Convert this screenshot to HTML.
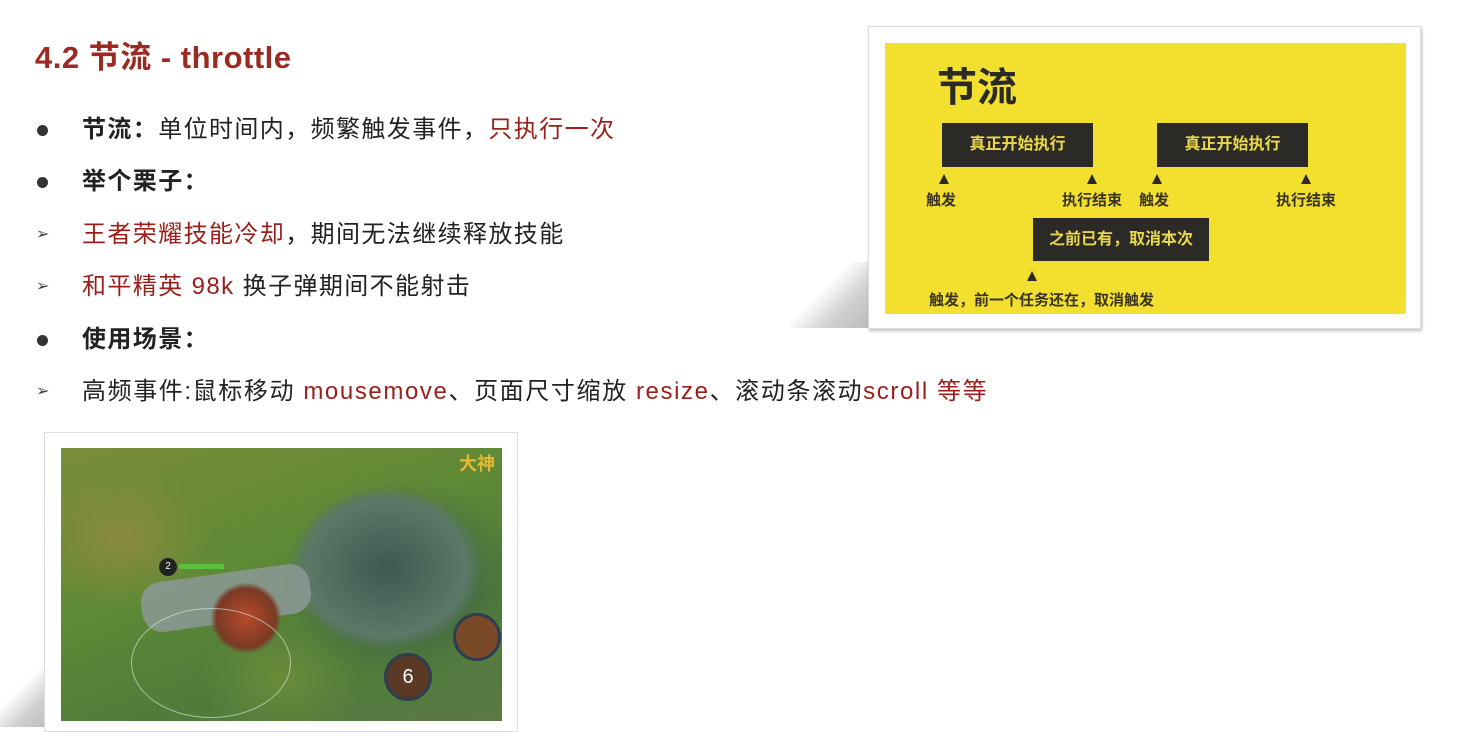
<!DOCTYPE html>
<html><head><meta charset="utf-8"><style>
*{margin:0;padding:0;box-sizing:border-box}
body{width:1480px;height:727px;background:#fff;position:relative;overflow:hidden;font-family:"Liberation Sans","Noto Sans CJK SC",sans-serif;color:#222}
.t{position:absolute;left:35px;top:32px;font-size:31px;font-weight:bold;color:#9a2a22;white-space:nowrap;letter-spacing:0.5px}
.l{position:absolute;left:82px;font-size:24px;letter-spacing:1.4px;white-space:nowrap;line-height:30px}
.r{color:#9a1f1a}
.b{font-weight:bold}
.dot{position:absolute;left:37px;width:11px;height:11px;border-radius:50%;background:#333}
.ar{position:absolute;left:36px;font-size:16px;color:#444}
.card{position:absolute;left:868px;top:26px;width:553px;height:303px;background:#fff;border:1px solid #ddd;box-shadow:1px 2px 3px rgba(0,0,0,.25)}
.y{position:absolute;left:16px;top:16px;width:521px;height:271px;background:#f2df2e}
.bx{position:absolute;background:#2c2a26;color:#e8d84a;font-weight:bold;font-size:16px;text-align:center;line-height:44px}
.s{position:absolute;font-size:15px;font-weight:bold;color:#3a3320;white-space:nowrap}
.tri{position:absolute;width:0;height:0;border-left:5px solid transparent;border-right:5px solid transparent;border-bottom:10px solid #2c2a26}
.shadow{position:absolute;left:790px;top:262px;width:80px;height:66px;background:linear-gradient(135deg,transparent 40%,#cfcfcf 70%,#bbb)}
.shadow2{position:absolute;left:0;top:660px;width:50px;height:67px;background:linear-gradient(135deg,transparent 40%,#d0d0d0 70%,#bbb)}
.gf{position:absolute;left:44px;top:432px;width:474px;height:300px;background:#fff;border:1px solid #ddd}
.g{position:absolute;left:16px;top:15px;width:441px;height:273px;overflow:hidden;
background:radial-gradient(ellipse 90px 70px at 60px 90px,#8a8a3e,transparent),radial-gradient(ellipse 120px 100px at 340px 130px,#3f5a4c,transparent),radial-gradient(ellipse 80px 60px at 220px 230px,#6a8c3a,transparent),linear-gradient(160deg,#7b8d3a,#5f8a36 40%,#4f7c3a 70%,#5a7a44)}
</style></head><body>
<div class="t">4.2 节流 - throttle</div>
<div class="dot" style="top:125px"></div>
<div class="l" style="top:115px"><span class="b">节流：</span>单位时间内，频繁触发事件，<span class="r">只执行一次</span></div>
<div class="dot" style="top:177px"></div>
<div class="l b" style="top:167px">举个栗子：</div>
<div class="ar" style="top:224px">➢</div>
<div class="l" style="top:220px"><span class="r">王者荣耀技能冷却</span>，期间无法继续释放技能</div>
<div class="ar" style="top:276px">➢</div>
<div class="l" style="top:272px"><span class="r">和平精英 98k</span> 换子弹期间不能射击</div>
<div class="dot" style="top:335px"></div>
<div class="l b" style="top:325px">使用场景：</div>
<div class="ar" style="top:381px">➢</div>
<div class="l" style="top:377px;letter-spacing:1.6px">高频事件:鼠标移动 <span class="r">mousemove</span>、页面尺寸缩放 <span class="r">resize</span>、滚动条滚动<span class="r">scroll 等等</span></div>
<div class="shadow"></div>
<div class="card"><div class="y">
<div style="position:absolute;left:52px;top:12px;font-size:40px;font-weight:bold;color:#2c2a26">节流</div>
<div class="bx" style="left:57px;top:80px;width:151px;height:44px">真正开始执行</div>
<div class="bx" style="left:272px;top:80px;width:151px;height:44px">真正开始执行</div>
<div class="bx" style="left:148px;top:175px;width:176px;height:43px">之前已有，取消本次</div>
<div class="tri" style="left:54px;top:131px"></div><div class="s" style="left:41px;top:146px">触发</div>
<div class="tri" style="left:202px;top:131px"></div><div class="s" style="left:177px;top:146px">执行结束</div>
<div class="tri" style="left:267px;top:131px"></div><div class="s" style="left:254px;top:146px">触发</div>
<div class="tri" style="left:416px;top:131px"></div><div class="s" style="left:391px;top:146px">执行结束</div>
<div class="tri" style="left:142px;top:228px"></div><div class="s" style="left:44px;top:246px">触发，前一个任务还在，取消触发</div>
</div></div>
<div class="shadow2"></div>
<div class="gf"><div class="g">
<div style="position:absolute;left:230px;top:40px;width:190px;height:160px;border-radius:50%;background:radial-gradient(#3c5a50,#5c7868 60%,transparent 72%)"></div>
<div style="position:absolute;left:80px;top:125px;width:170px;height:50px;border-radius:20px;background:#8f9a9c;transform:rotate(-8deg);opacity:.8"></div>
<div style="position:absolute;left:150px;top:135px;width:70px;height:70px;border-radius:40%;background:radial-gradient(#b84a2a,#7a3a26 60%,transparent 72%)"></div>
<div style="position:absolute;left:70px;top:160px;width:160px;height:110px;border-radius:50%;border:1px solid rgba(220,240,230,.6)"></div>
<div style="position:absolute;left:98px;top:110px;width:18px;height:18px;border-radius:50%;background:#222;color:#fff;font-size:10px;text-align:center;line-height:18px">2</div>
<div style="position:absolute;left:118px;top:116px;width:45px;height:5px;background:#5bc03a"></div>
<div style="position:absolute;left:392px;top:165px;width:48px;height:48px;border-radius:50%;background:#7a4a28;border:3px solid #2c3e50"></div>
<div style="position:absolute;left:323px;top:205px;width:48px;height:48px;border-radius:50%;background:#5a3a24;border:3px solid #2c3e50;color:#fff;font-size:20px;text-align:center;line-height:42px">6</div>
<div style="position:absolute;left:398px;top:2px;color:#e8b830;font-weight:bold;font-size:18px">大神</div>
</div></div>
</body></html>
